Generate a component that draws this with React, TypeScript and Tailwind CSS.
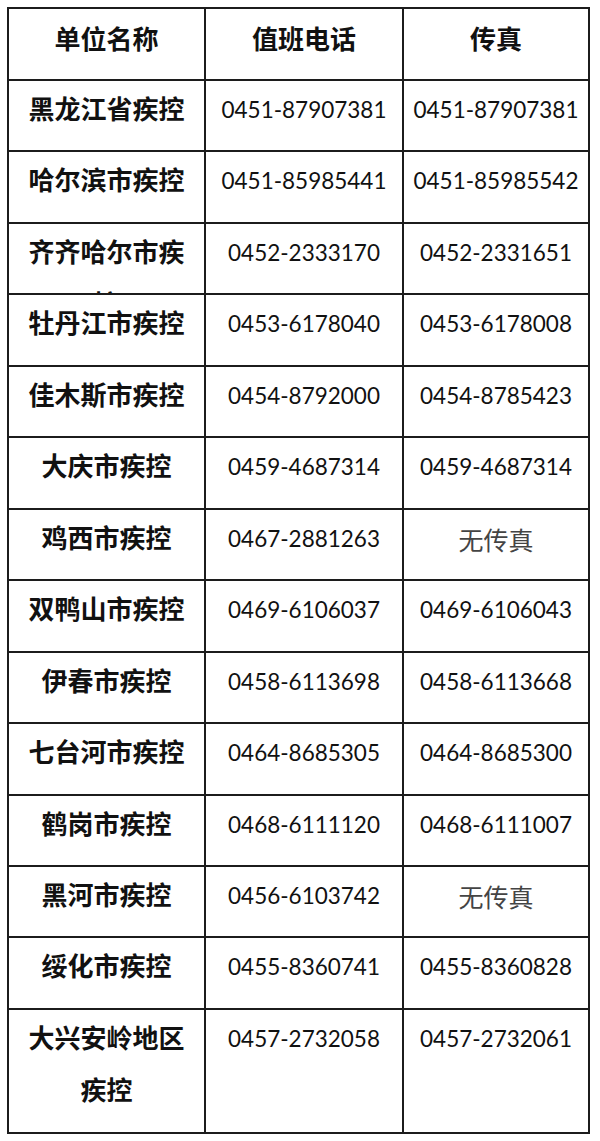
const rows: [string, string, string][] = [
  ['黑龙江省疾控', '0451-87907381', '0451-87907381'],
  ['哈尔滨市疾控', '0451-85985441', '0451-85985542'],
  ['齐齐哈尔市疾控', '0452-2333170', '0452-2331651'],
  ['牡丹江市疾控', '0453-6178040', '0453-6178008'],
  ['佳木斯市疾控', '0454-8792000', '0454-8785423'],
  ['大庆市疾控', '0459-4687314', '0459-4687314'],
  ['鸡西市疾控', '0467-2881263', '无传真'],
  ['双鸭山市疾控', '0469-6106037', '0469-6106043'],
  ['伊春市疾控', '0458-6113698', '0458-6113668'],
  ['七台河市疾控', '0464-8685305', '0464-8685300'],
  ['鹤岗市疾控', '0468-6111120', '0468-6111007'],
  ['黑河市疾控', '0456-6103742', '无传真'],
  ['绥化市疾控', '0455-8360741', '0455-8360828'],
  ['大兴安岭地区疾控', '0457-2732058', '0457-2732061'],
]

const cjk = "font-['Noto_Sans_CJK_SC',sans-serif]"
const num = "font-['Lato','Noto_Sans_CJK_SC',sans-serif]"

function Num({ v }: { v: string }) {
  if (v === '无传真') {
    return <span className={`${cjk} text-[25px] font-normal text-[#444]`}>{v}</span>
  }
  return <span className={`${num} text-[22.5px] text-[#111]`}>{v}</span>
}

export default function App() {
  return (
    <div className="min-h-screen bg-white pt-[7px] pl-[7px]">
      <div className="grid w-[583px] grid-cols-[197px_198px_186px] border-l-2 border-t-2 border-[#1c1c1c]">
        {/* header */}
        <div className={`h-[72px] overflow-hidden border-r-2 border-b-2 border-[#1c1c1c] pt-[3px] text-center text-[26px] font-bold leading-[52px] text-[#111] ${cjk}`}>
          单位名称
        </div>
        <div className={`h-[72px] overflow-hidden border-r-2 border-b-2 border-[#1c1c1c] pt-[3px] text-center text-[26px] font-bold leading-[52px] text-[#111] ${cjk}`}>
          值班电话
        </div>
        <div className={`h-[72px] overflow-hidden border-r-2 border-b-2 border-[#1c1c1c] pt-[3px] text-center text-[26px] font-bold leading-[52px] text-[#111] ${cjk}`}>
          传真
        </div>

        {rows.map(([name, tel, fax], i) => {
          const last = i === rows.length - 1
          const h = last ? 'h-[124px]' : 'h-[71.46px]'
          return (
            <div key={name} className="contents">
              <div className={`${h} overflow-hidden border-r-2 border-b-2 border-[#1c1c1c] px-[10px] pt-[1px] text-center text-[26px] font-bold leading-[52px] text-[#111] ${cjk}`}>
                {name}
              </div>
              <div className={`${h} overflow-hidden border-r-2 border-b-2 border-[#1c1c1c] pt-[3px] text-center leading-[52px]`}>
                <Num v={tel} />
              </div>
              <div className={`${h} overflow-hidden border-r-2 border-b-2 border-[#1c1c1c] pt-[3px] text-center leading-[52px]`}>
                <Num v={fax} />
              </div>
            </div>
          )
        })}
      </div>
    </div>
  )
}
